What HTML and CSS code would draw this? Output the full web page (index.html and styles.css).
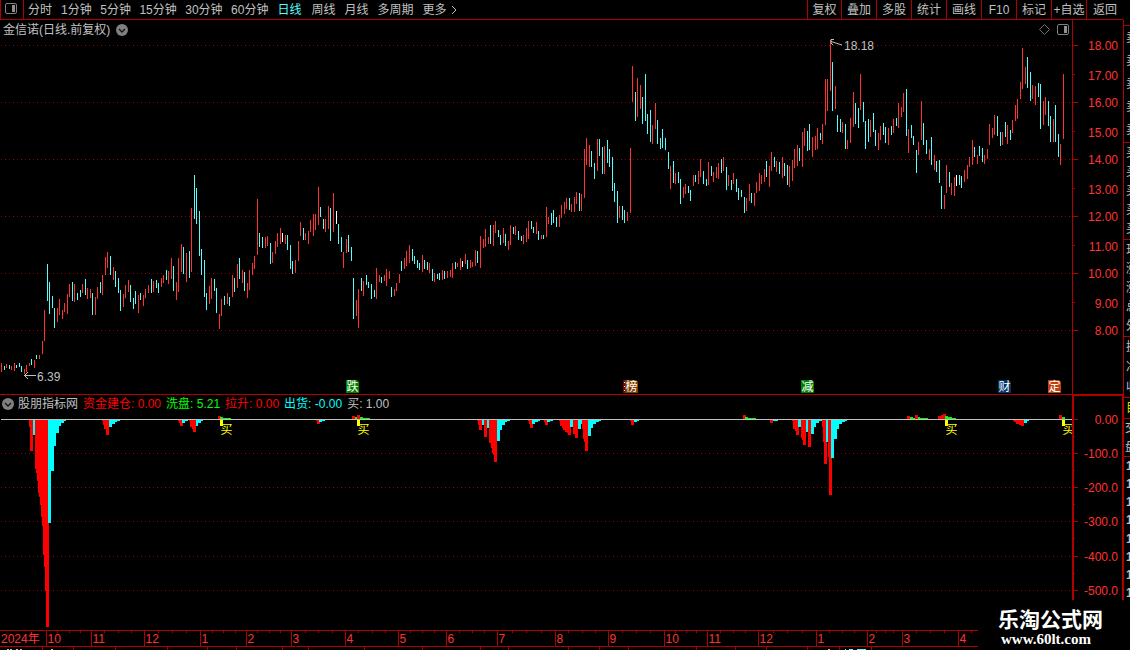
FILE: index.html
```html
<!DOCTYPE html>
<html lang="zh-CN">
<head>
    <meta charset="UTF-8">
    <meta name="viewport" content="width=device-width, initial-scale=1.0">
    <title>金信诺 日线</title>
    <link rel="stylesheet" href="styles.css">
</head>
<body>
    <div class="terminal">
        <div class="left">
            <!-- 顶部工具栏 -->
            <div class="toolbar">
                <div class="layout-btn">
                    <svg width="12" height="11" viewBox="0 0 12 11"><rect x="0.5" y="0.5" width="11" height="10" rx="1.5" fill="none" stroke="#808080"/><rect x="7" y="2" width="3" height="7" fill="#909090"/></svg>
                </div>
                <div class="periods">
                    <span>分时</span><span>1分钟</span><span class="min">5分钟</span><span class="min">15分钟</span><span class="min">30分钟</span><span class="min">60分钟</span><span class="active">日线</span><span class="week">周线</span><span>月线</span><span>多周期</span><span class="more">更多<svg width="6" height="10" viewBox="0 0 6 10"><path d="M1 1L5 5L1 9" fill="none" stroke="#c0c0c0"/></svg></span>
                </div>
                <div class="tools">
                    <span>复权</span><span>叠加</span><span>多股</span><span>统计</span><span>画线</span><span>F10</span><span>标记</span><span>+自选</span><span>返回</span>
                </div>
            </div>

            <!-- K线主图 -->
            <div class="panel">
                <div class="panel-title">
                    <span>金信诺(日线.前复权)</span>
                    <svg width="12" height="12" viewBox="0 0 12 12"><circle cx="6" cy="6" r="6" fill="#808080"/><path d="M3 5L6 8L9 5" fill="none" stroke="#111" stroke-width="1.3"/></svg>
                </div>
                <div class="panel-icons">
                    <svg width="11" height="11" viewBox="0 0 11 11"><path d="M5.5 0.5L10.5 5.5L5.5 10.5L0.5 5.5Z" fill="none" stroke="#707070"/></svg>
                    <svg width="12" height="11" viewBox="0 0 12 11"><rect x="0.5" y="0.5" width="11" height="10" rx="1.5" fill="none" stroke="#808080"/><rect x="7" y="2" width="3" height="7" fill="#909090"/></svg>
                </div>
                <svg id="kline" width="1124" height="374" viewBox="0 20 1124 374"></svg>
            </div>

            <!-- 指标副图 -->
            <div class="panel sub">
                <div class="panel-title legend">
                    <svg width="12" height="12" viewBox="0 0 12 12"><circle cx="6" cy="6" r="6" fill="#808080"/><path d="M3 5L6 8L9 5" fill="none" stroke="#111" stroke-width="1.3"/></svg>
                    <span>股朋指标网</span>
                    <span class="red">资金建仓: 0.00</span>
                    <span class="green">洗盘: 5.21</span>
                    <span class="red">拉升: 0.00</span>
                    <span class="cyan">出货: -0.00</span>
                    <span>买: 1.00</span>
                </div>
                <svg id="indicator" width="1124" height="256" viewBox="0 394 1124 256"></svg>
            </div>
        </div>

        <!-- 右侧盘口(只露出一条边) -->
        <div class="quote">
            <div class="group sell"><i>卖</i><i>卖</i><i>卖</i><i>卖</i><i>卖</i></div>
            <div class="group"><i>买</i><i>买</i><i>买</i><i>买</i><i>买</i></div>
            <div class="group"><i>现</i><i>涨</i><i>涨</i><i>总</i><i>外</i></div>
            <div class="group short"><i>换</i><i>净</i><i>收</i></div>
            <div class="group tab"><i>目</i></div>
            <div class="group deal"><i>交</i><i>盘</i></div>
            <div class="group ticks"><i>1</i><i>1</i><i>1</i><i>1</i><i>1</i><i>1</i><i>1</i><i>1</i></div>
        </div>

        <div class="watermark">
            <div class="site">乐淘公式网</div>
            <div class="url">www.60lt.com</div>
        </div>
    </div>
    <script src="chart.js"></script>
</body>
</html>
```
FILE: styles.css
```css
body {
    margin: 0;
    background-color: #000;
    color: #c0c0c0;
    font-family: "Liberation Sans", "Noto Sans CJK SC", sans-serif;
    font-size: 12px;
    overflow: hidden;
}
svg {
    display: block;
}
.terminal {
    position: relative;
    width: 1130px;
    height: 650px;
    display: flex;
    overflow: hidden;
}
.left {
    width: 1124px;
    flex: none;
}
.toolbar {
    display: flex;
    height: 20px;
    box-sizing: border-box;
    width: 1123px;
    border-bottom: 1px solid #b00000;
    line-height: 20px;
    white-space: nowrap;
}
.layout-btn {
    width: 24px;
    box-sizing: border-box;
    border-left: 1px solid #b00000;
    border-right: 1px solid #b00000;
    padding: 3px 0 0 4px;
}
.periods {
    display: flex;
    gap: 9px;
    padding-left: 4px;
    height: 19px;
    flex: 1;
}
.periods .min {
    margin-left: -0.5px;
}
.periods .week {
    margin-left: 1px;
}
.periods .active {
    color: #54fcfc;
}
.periods .more {
    display: flex;
    align-items: center;
    gap: 4px;
}
.tools {
    display: flex;
    height: 19px;
}
.tools span {
    width: 35px;
    box-sizing: border-box;
    border-left: 1px solid #b00000;
    text-align: center;
}
.tools span:first-child {
    width: 34px;
}
.tools span:last-child {
    width: 37px;
}
.panel {
    position: relative;
}
.panel-title {
    position: absolute;
    left: 3px;
    top: 1px;
    display: flex;
    align-items: center;
    gap: 6px;
    line-height: 19px;
    white-space: nowrap;
}
.panel-title svg {
    margin-top: -2px;
}
.legend {
    gap: 5px;
    left: 2px;
}
.legend svg {
    margin-right: -1px;
}
.panel-icons {
    position: absolute;
    right: 55px;
    top: 4px;
    display: flex;
    gap: 7px;
}
.red {
    color: #f00;
}
.green {
    color: #0f0;
}
.cyan {
    color: #0ff;
}
svg text {
    font-size: 12px;
}
.axis {
    fill: #ff3232;
    text-anchor: end;
}
.month {
    fill: #ff3232;
}
.note {
    fill: #c0c0c0;
}
.buy {
    fill: #ff0;
}
.badge {
    fill: #fff;
}
.quote {
    width: 6px;
    overflow: hidden;
    padding-top: 25px;
    flex: none;
}
.group {
    border-top: 1px solid #b00000;
    box-sizing: border-box;
    height: 97px;
    padding-left: 2px;
    display: flex;
    flex-direction: column;
    justify-content: space-around;
    overflow: hidden;
}
.group i {
    font-style: normal;
    line-height: 14px;
    width: 14px;
}
.sell {
    height: 117px;
}
.short {
    height: 61px;
}
.tab {
    height: 21px;
    color: #e0e000;
}
.deal {
    height: 38px;
    padding-left: 1px;
}
.ticks {
    height: 146px;
    font-weight: bold;
}
.watermark {
    position: absolute;
    left: 978px;
    top: 600px;
    width: 152px;
    height: 50px;
    background-color: #000;
    color: #fff;
    font-weight: bold;
    white-space: nowrap;
}
.site {
    font-family: "Noto Sans CJK SC", sans-serif;
    font-size: 21px;
    line-height: 22px;
    padding: 7px 0 0 20px;
}
.url {
    font-family: "Liberation Serif", serif;
    font-size: 15px;
    line-height: 17px;
    padding: 2px 0 0 23px;
}
```
FILE: chart.js
```js
// x,最高y,最低y  默认红色, c=青色 w=白色
const bars = `
1,363,372 4,366,370c 6,364,368 9,365,369c 11,366,370 14,363,371 16,365,368c 19,363,367c 21,366,372c 24,369,374
26,365,372 29,363,366 31,359,365c 34,360,368 36,355,359c 39,355,359 42,341,354 44,310,341 47,264,301c 49,282,314c
52,296,308c 54,308,328c 57,308,322 59,299,315 62,310,319 64,303,312 67,294,314 69,284,297 72,282,301c 74,284,302
77,293,300c 80,290,297c 82,284,293 85,279,295c 87,288,299 90,289,298 92,293,315c 95,297,315 97,287,299 100,282,293c
102,275,295 105,257,275 107,252,268 110,256,275c 113,267,280 115,271,287c 118,278,293c 120,290,311c 123,294,307
125,285,298 128,280,292 130,285,302c 133,298,309c 135,291,304c 138,295,313 140,293,300c 143,295,306 145,289,298
148,285,293 151,279,293c 153,281,292 156,280,288c 158,283,293c 161,278,287 163,275,283 166,270,280c 168,271,284
171,258,279 173,266,291c 176,282,300 178,258,292 181,244,272 183,247,274c 186,253,282 189,251,278c 191,208,272
194,175,219c 196,188,224c 199,211,256c 201,249,275c 204,260,297c 206,293,310c 209,286,304 211,278,299 214,279,291c
216,288,313c 219,314,329 221,299,316 224,296,305c 227,293,304 229,297,306c 232,275,297 234,278,292c 237,264,288
239,258,279c 242,270,283 244,272,291c 247,283,298 249,270,290 252,263,275 254,256,269 257,199,255 259,233,247c
262,237,248c 265,237,248 267,236,246 270,243,264c 272,252,263 275,241,254 277,233,247 280,228,244 282,233,242w
285,235,244 287,235,250c 290,245,269c 292,261,274c 295,260,273 298,241,261 300,222,236 303,228,240c 305,233,240
308,231,244 310,220,232 313,214,236 315,214,230 318,187,225 320,207,217c 323,219,229c 325,219,232 328,206,229
330,208,241c 333,193,232 336,211,224w 338,224,244c 341,237,252c 343,252,268 346,239,253 348,235,252c 351,247,261c
353,278,319c 356,300,316 358,289,328 361,278,291c 363,281,296 366,275,285c 368,282,288c 371,284,299c 374,290,297c
376,268,299 379,275,282 381,277,283c 384,275,281 386,269,286 389,271,279 391,287,297c 394,289,296 396,283,291
399,274,283 401,261,271c 404,258,269 406,251,266 409,245,263 412,249,261c 414,256,264c 417,260,268c 419,263,270c
422,255,272 424,260,269c 427,262,270c 429,263,273 432,269,281c 434,273,282 437,274,279c 439,273,280c 442,270,280
444,271,279c 447,271,278 450,270,277 452,263,278 455,262,269c 457,263,267 460,258,270 462,261,267w 465,254,264
467,260,269c 470,260,268 472,262,267 475,250,266 477,251,263c 480,236,268 483,239,248 485,229,247 488,237,244
490,225,244c 493,225,246 495,221,233 498,230,237c 500,235,245c 503,228,243 505,234,246c 508,241,250 510,225,245
513,227,234c 515,226,235 518,231,240c 521,236,241c 523,235,244 526,228,242 528,221,239 531,221,229c 533,227,233c
536,222,234 538,231,240c 541,235,239 543,235,239c 546,207,237 548,217,224 551,213,225c 553,210,223c 556,217,227c
559,215,227 561,205,218 564,202,214 566,198,209 569,198,210c 571,204,212 574,197,212 576,192,204 579,193,211c
581,194,211 584,149,198 586,138,165 589,145,167 591,151,167c 594,163,179c 597,139,171 599,139,156c 602,147,174c
604,146,174 607,140,163c 609,149,167c 612,157,191c 614,183,202c 617,191,223c 619,206,218 622,206,220c 624,210,223c
627,212,221 630,148,213 632,66,102 635,92,121c 637,78,117 640,85,109 642,97,124c 645,74,121c 647,114,134c
650,110,142c 652,125,144 655,103,129 657,120,144c 660,138,149c 662,129,148c 665,138,150c 668,152,169c 670,166,189
673,161,183c 675,173,184 678,172,183c 680,179,204c 683,187,198 685,184,194 688,186,193c 690,190,201c 693,175,186
695,175,182c 698,171,184 700,159,177 703,171,184c 706,179,186c 708,162,185 711,166,176c 713,172,182 716,167,178
718,163,179 721,159,173c 723,157,171 726,167,190c 728,175,186 731,180,190c 733,173,184 736,179,192c 738,188,200c
741,190,197c 744,197,213c 746,198,211 749,184,201 751,193,203c 754,193,206 756,182,193 759,173,191 761,175,184
764,169,182 766,161,177c 769,166,187 771,152,171 774,157,167c 776,161,172 779,162,174c 782,157,178 784,163,176c
787,165,185c 789,166,187 792,160,181 794,149,168 797,145,166 799,148,161c 802,132,167 804,128,146 807,131,151c
809,124,150c 812,137,157 815,136,150 817,128,149 820,133,140c 822,124,144 825,79,125 827,79,111 830,40,91
832,62,111c 835,86,109 837,115,132c 840,119,132c 842,122,133 845,124,149c 847,140,149 850,118,143 853,92,127
855,103,124c 858,108,128c 860,74,110 863,102,122c 865,121,149c 868,119,142c 870,120,137 873,113,132c 875,130,146c
878,133,150 880,126,140 883,123,135c 885,127,143c 888,128,145 891,126,135c 893,119,133 896,118,126c 898,103,128
901,107,117 903,93,112 906,89,136c 908,129,153 911,125,138c 913,136,145c 916,150,173c 918,142,155 921,101,140
923,123,145c 926,140,154c 929,149,160 931,137,165c 934,155,170 936,161,172c 939,160,183c 941,186,209c 944,195,209
946,165,193 949,172,187c 951,183,195 954,177,196 956,175,186w 959,175,185c 961,176,188c 964,170,182 967,165,179
969,157,167 972,140,165 974,147,157c 977,155,164 979,146,156c 982,148,162c 984,155,164 987,149,159 989,124,145
992,128,138 994,115,135 997,116,136c 1000,132,146c 1002,132,145 1005,122,137c 1007,125,144 1010,130,140c
1012,120,133 1015,105,121 1017,99,119 1020,82,99 1022,48,89 1025,67,84 1027,57,88c 1030,72,101c 1032,85,99
1035,86,105 1038,83,97c 1040,84,129c 1043,101,125 1045,97,115 1048,101,126c 1050,116,142c 1053,119,142
1055,105,142c 1058,134,157c 1060,144,165 1063,74,139`;

// 零轴下方柱: x,宽,底部y  r=红 c=青
const below = `
29,1,427r 30,3,451r 33,3,435c 35,1,469r 36,1,473r 37,1,481r 38,1,493r 39,1,497r 40,1,505r 41,1,517r 42,1,526r
43,1,555r 44,1,567r 45,1,591r 46,3,627r 48,3,523c 51,3,471c 54,2,446c 56,3,433c 59,2,426c 61,3,423c 64,2,421c
102,1,421r 103,1,425r 104,2,429r 106,3,435r 109,3,427c 112,3,424c 115,2,422c 117,3,421c
178,1,421r 179,1,423r 180,3,426r 182,3,423c 185,3,421c 189,1,421r 190,2,427r 192,1,429r 193,3,432r 196,2,426c
198,3,423c 201,2,421c 316,1,421r 317,3,424r 319,3,422c 322,3,421c
477,1,421r 478,1,425r 479,3,430r 482,3,425c 484,3,437r 487,2,428c 489,2,443r 491,1,448r 492,1,453r 493,1,455r
494,3,462r 497,3,441c 500,2,430c 502,3,425c 505,2,422c 507,3,421c
528,1,421r 529,1,424r 530,3,428r 532,3,424c 535,3,422c 538,2,421c 544,1,422r 545,3,425r 547,3,422c 550,3,421c
559,1,421r 560,2,426r 562,1,428r 563,2,430r 565,2,432r 567,1,433r 568,3,435r 570,3,427c 573,2,434r 575,3,438r
578,3,429c 581,2,424c 582,1,429r 583,1,439r 584,1,442r 585,3,451r 588,3,436c 591,2,428c 593,3,424c 596,3,422c
599,2,421c 630,1,421r 631,3,425r 634,3,422c 637,2,421c 770,3,423r 773,5,421c
792,1,421r 793,2,429r 795,1,431r 796,3,435r 798,3,427c 801,1,438r 802,1,440r 803,3,445r 806,3,432c 808,3,447r
811,3,434c 814,2,427c 816,3,423c 819,5,421c 822,1,427r 823,1,442r 824,3,464r 826,3,442c 828,1,457r 829,3,495r
831,3,458c 834,3,439c 837,2,429c 839,3,424c 842,3,422c 845,2,421c
1013,1,421r 1014,2,422r 1016,3,424r 1019,2,425r 1021,3,426r 1024,3,423c 1027,2,421c`;

// 零轴上方柱: x,宽,顶部y  r=红 g=绿
const above = `
218,3,416r 220,3,417g 223,8,418g 352,3,416r 355,3,417g 357,3,415r 360,3,417g 363,7,418g
743,3,415r 745,3,417g 748,8,418g 907,3,416r 910,3,417g 913,15,418g 915,3,415r 918,2,417g
938,3,416r 941,2,415r 943,3,414r 945,3,416g 948,4,417g 952,4,418g 1059,3,415r 1062,3,417g`;

const colors = { r: '#ff0000', c: '#00ffff', g: '#00ff00' };

const rect = (x, y, w, h, fill) => `<rect x="${x}" y="${y}" width="${w}" height="${h}" fill="${fill}"/>`;
const text = (x, y, str, cls) => `<text x="${x}" y="${y}" class="${cls}">${str}</text>`;
const gridLine = y => `<path d="M1 ${y + 0.5}H1072" stroke="#980000" stroke-dasharray="1 3"/>`;
const line = '#b00000';

function drawKline() {
    let out = '';
    [45, 102, 159, 216, 273, 330].forEach((y, i) => {
        out += gridLine(y) + rect(1073, y, 5, 1, line);
        out += text(1118, y + 5, (18 - i * 2) + '.00', 'axis');
    });
    [74, 131, 188, 245, 302].forEach((y, i) => {
        out += rect(1073, y, 2, 1, line);
        out += text(1118, y + 6, (17 - i * 2) + '.00', 'axis');
    });

    bars.trim().split(/\s+/).forEach(item => {
        const [x, top, bottom] = item.split(',').map(parseFloat);
        const fill = item.endsWith('c') ? '#54fcfc' : item.endsWith('w') ? '#ffffff' : '#ff3232';
        out += rect(x, top, 1, bottom - top, fill);
    });

    // 最高价 / 最低价
    out += '<path d="M24 375.5H36M28 372L24.5 375.5L28 379" fill="none" stroke="#c0c0c0"/>';
    out += text(37, 381, '6.39', 'note');
    out += '<path d="M842 45L831 41.5M834 39.5H831V43L833 45" fill="none" stroke="#c0c0c0"/>';
    out += text(844, 50, '18.18', 'note');

    // 底部事件标记
    [[346, '跌', '#008000'], [625, '榜', '#804000'], [801, '减', '#008000'], [998, '财', '#003366'], [1048, '定', '#c04010']].forEach(([x, s, fill]) => {
        out += `<path d="M${x} 380H${x + 11}L${x + 13} 382V393H${x}Z" fill="${fill}"/>`;
        out += text(x + 0.5, 391, s, 'badge');
    });
    out += rect(623, 380, 2, 13, '#800000');
    out += rect(624, 382, 1, 1, '#fff') + rect(624, 386, 1, 1, '#fff') + rect(624, 390, 1, 1, '#fff');

    out += rect(1072, 20, 1, 374, line) + rect(1123, 20, 1, 374, line);
    document.getElementById('kline').innerHTML = out;
}

function drawIndicator() {
    let out = rect(0, 394, 1124, 1, line) + rect(1072, 395, 52, 1, line);
    [419, 453, 487, 521, 556, 590].forEach((y, i) => {
        if (i) out += gridLine(y);
        out += rect(1074, y, 4, 1, line);
        if (i < 5) out += rect(1074, y + 17, 1, 1, line);
        out += text(1118, y + 5, i ? '-' + i + '00.0' : '0.00', 'axis');
    });

    out += rect(1, 419, 1071, 1, '#c0c0c0');
    below.trim().split(/\s+/).forEach(item => {
        const [x, w, bottom] = item.split(',').map(parseFloat);
        out += rect(x, 420, w, bottom - 420, colors[item.slice(-1)]);
    });
    above.trim().split(/\s+/).forEach(item => {
        const [x, w, top] = item.split(',').map(parseFloat);
        out += rect(x, top, w, 419 - top, colors[item.slice(-1)]);
    });

    // 买点
    out += '<clipPath id="plot"><rect x="0" y="394" width="1072" height="236"/></clipPath><g clip-path="url(#plot)">';
    [220, 357, 945, 1062].forEach(x => {
        out += rect(x, 420, 3, 6, '#ffff00') + text(x + 0.5, 434, '买', 'buy');
    });
    out += '</g>';

    out += rect(1072, 394, 2, 206, line) + rect(1122, 394, 2, 206, line);

    // 时间轴
    out += rect(0, 630, 978, 1, line) + rect(0, 646, 978, 1, line);
    const months = [[46, '10'], [91, '11'], [144, '12'], [200, '1'], [246, '2'], [291, '3'], [345, '4'], [398, '5'], [446, '6'], [497, '7'], [555, '8'], [608, '9'], [664, '10'], [707, '11'], [758, '12'], [816, '1'], [867, '2'], [902, '3'], [958, '4']];
    out += text(1, 643, '2024年', 'month');
    months.forEach(([x, name], i) => {
        out += rect(x, 631, 1, 15, line) + text(x + 1.5, 643, name, 'month');
        const next = i < 18 ? months[i + 1][0] : 1010;
        for (let k = 1; k < 4; k++) {
            const tick = Math.round(x + (next - x) * k / 4);
            if (tick < 978) out += rect(tick, 631, 1, 2, line);
        }
    });

    // 下一行的上沿
    [42, 73, 115, 167, 207, 236, 282, 308, 364, 422, 480, 508, 568, 599, 628, 696, 735, 766, 807, 839, 871].forEach(x => {
        out += rect(x, 647, 1, 3, line);
    });
    [7, 10, 16, 20, 51, 828].forEach(x => {
        out += rect(x, 649, 2, 1, '#c0c0c0');
    });
    out += rect(845, 649, 1, 1, '#54fcfc') + rect(849, 649, 4, 1, '#54fcfc') + rect(857, 649, 9, 1, '#54fcfc');
    document.getElementById('indicator').innerHTML = out;
}

drawKline();
drawIndicator();
```
